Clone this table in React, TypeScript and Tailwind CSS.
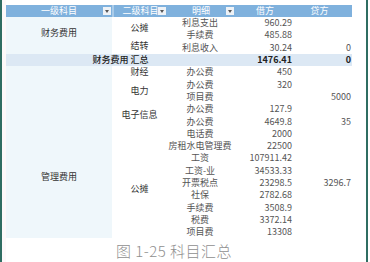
import React from "react";

const font = { fontFamily: '"Noto Sans CJK SC", "Noto Sans", sans-serif' };

function Drop() {
  return (
    <span className="absolute right-[1px] top-[2px] w-[8px] h-[8px] bg-[#eef2f6] flex items-center justify-center">
      <span className="block w-0 h-0 border-l-[2.5px] border-r-[2.5px] border-t-[3px] border-l-transparent border-r-transparent border-t-[#555]" />
    </span>
  );
}

type Row = { d: string; a: string; b: string };

const g2: Row[] = [
  { d: "办公费", a: "450", b: "" },
  { d: "办公费", a: "320", b: "" },
  { d: "项目费", a: "", b: "5000" },
  { d: "办公费", a: "127.9", b: "" },
  { d: "办公费", a: "4649.8", b: "35" },
  { d: "电话费", a: "2000", b: "" },
  { d: "房租水电管理费", a: "22500", b: "" },
  { d: "工资", a: "107911.42", b: "" },
  { d: "工资-业", a: "34533.33", b: "" },
  { d: "开票税点", a: "23298.5", b: "3296.7" },
  { d: "社保", a: "2782.68", b: "" },
  { d: "手续费", a: "3508.9", b: "" },
  { d: "税费", a: "3372.14", b: "" },
  { d: "项目费", a: "13308", b: "" },
];

const g1: Row[] = [
  { d: "利息支出", a: "960.29", b: "" },
  { d: "手续费", a: "485.88", b: "" },
  { d: "利息收入", a: "30.24", b: "0" },
];

function Cells({ r, row }: { r: Row; row: number }) {
  return (
    <>
      <div className="col-start-3 flex items-center justify-center pr-[2px] text-[#555] whitespace-nowrap" style={{ gridRowStart: row }}>{r.d}</div>
      <div className="col-start-4 flex items-center justify-end pr-[3px] text-[#555]" style={{ gridRowStart: row }}>{r.a}</div>
      <div className="col-start-5 flex items-center justify-end pr-[1px] text-[#555]" style={{ gridRowStart: row }}>{r.b}</div>
    </>
  );
}

export default function App() {
  return (
    <div className="w-[370px] h-[262px] bg-white flex overflow-hidden" style={font}>
      <div className="w-[2px] h-full bg-[#2f6d62]" />
      <div className="w-[4px] h-full bg-[#fdf9fa]" />
      <div className="w-[346px] flex flex-col pt-[5px]">
        <div
          className="grid text-[9px] leading-[12px]"
          style={{
            gridTemplateColumns: "106px 55px 68px 60px 57px",
            gridTemplateRows: "12px repeat(18, 12.3px)",
          }}
        >
          {/* header */}
          <div className="row-start-1 col-start-1 col-span-5 bg-[#7fb1dd]" />
          <div className="row-start-1 col-start-1 relative flex items-center justify-center text-white">
            一级科目
            <Drop />
          </div>
          <div className="row-start-1 col-start-2 relative flex items-center justify-center text-white border-l-[2px] border-[#a9cbe9]">
            二级科目
            <Drop />
          </div>
          <div className="row-start-1 col-start-3 relative flex items-center justify-center text-white">
            明细
            <Drop />
          </div>
          <div className="row-start-1 col-start-4 flex items-center justify-center text-white">借方</div>
          <div className="row-start-1 col-start-5 flex items-center justify-center text-white pr-[8px]">贷方</div>

          {/* col1 */}
          <div className="row-start-2 row-span-3 col-start-1 bg-[#eff7fb] flex items-start justify-center pt-[10px] text-[#333]">
            财务费用
          </div>
          <div className="row-start-6 row-span-14 col-start-1 bg-[#eff7fb] flex items-start justify-center pt-[105px] text-[#333]">
            管理费用
          </div>

          {/* group 1 */}
          <div className="row-start-2 row-span-2 col-start-2 flex items-center justify-center text-[#333] pb-[2px]">公摊</div>
          <div className="row-start-4 col-start-2 flex items-center justify-center text-[#333] pb-[3px]">结转</div>
          {g1.map((r, i) => (
            <Cells key={i} r={r} row={i + 2} />
          ))}

          {/* summary */}
          <div className="row-start-5 col-start-1 col-span-5 bg-[#dce8f4]" />
          <div className="row-start-5 col-start-1 col-span-3 flex items-center justify-center text-[#222] font-medium">财务费用 汇总</div>
          <div className="row-start-5 col-start-4 flex items-center justify-end pr-[3px] text-[#222] font-bold">1476.41</div>
          <div className="row-start-5 col-start-5 flex items-center justify-end pr-[1px] text-[#222] font-bold">0</div>

          {/* group 2 */}
          <div className="row-start-6 col-start-2 flex items-center justify-center text-[#333]">财经</div>
          <div className="row-start-7 row-span-2 col-start-2 flex items-center justify-center text-[#333]">电力</div>
          <div className="row-start-9 row-span-2 col-start-2 flex items-center justify-center text-[#333]">电子信息</div>
          <div className="row-start-11 row-span-9 col-start-2 flex items-start justify-center pt-[55px] text-[#333]">公摊</div>
          {g2.map((r, i) => (
            <Cells key={i} r={r} row={i + 6} />
          ))}
        </div>
        <div className="mt-[3px] w-full flex justify-center pr-[10px]">
          <span className="text-[15px] leading-[20px] text-[#8f8f8f] font-light whitespace-nowrap tracking-[0.5px]">
            图 1-25 科目汇总
          </span>
        </div>
      </div>
      <div className="w-[14px] h-full bg-white" />
      <div className="w-[2px] h-full bg-[#2f6d62]" />
      <div className="w-[2px] h-full bg-white" />
    </div>
  );
}
